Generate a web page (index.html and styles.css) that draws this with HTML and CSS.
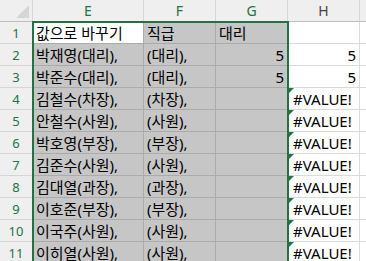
FILE: index.html
```html
<!DOCTYPE html>
<html lang="ko">
<head>
<meta charset="UTF-8" />
<title>Sheet1</title>
<link rel="stylesheet" href="styles.css">
</head>
<body>

<div class="sheet">
  <div class="corner"></div>
  <div class="col-head picked">E</div>
  <div class="col-head picked">F</div>
  <div class="col-head picked">G</div>
  <div class="col-head">H</div>
  <div class="col-head"></div>

  <div class="row-head">1</div>
  <div class="cell active">값으로 바꾸기</div>
  <div class="cell sel">직급</div>
  <div class="cell sel">대리</div>
  <div class="cell"></div>
  <div class="cell"></div>

  <div class="row-head">2</div>
  <div class="cell sel">박재영(대리),</div>
  <div class="cell sel">(대리),</div>
  <div class="cell sel num">5</div>
  <div class="cell num">5</div>
  <div class="cell"></div>

  <div class="row-head">3</div>
  <div class="cell sel">박준수(대리),</div>
  <div class="cell sel">(대리),</div>
  <div class="cell sel num">5</div>
  <div class="cell num">5</div>
  <div class="cell"></div>

  <div class="row-head">4</div>
  <div class="cell sel">김철수(차장),</div>
  <div class="cell sel">(차장),</div>
  <div class="cell sel"></div>
  <div class="cell err">#VALUE!</div>
  <div class="cell"></div>

  <div class="row-head">5</div>
  <div class="cell sel">안철수(사원),</div>
  <div class="cell sel">(사원),</div>
  <div class="cell sel"></div>
  <div class="cell err">#VALUE!</div>
  <div class="cell"></div>

  <div class="row-head">6</div>
  <div class="cell sel">박호영(부장),</div>
  <div class="cell sel">(부장),</div>
  <div class="cell sel"></div>
  <div class="cell err">#VALUE!</div>
  <div class="cell"></div>

  <div class="row-head">7</div>
  <div class="cell sel">김준수(사원),</div>
  <div class="cell sel">(사원),</div>
  <div class="cell sel"></div>
  <div class="cell err">#VALUE!</div>
  <div class="cell"></div>

  <div class="row-head">8</div>
  <div class="cell sel">김대열(과장),</div>
  <div class="cell sel">(과장),</div>
  <div class="cell sel"></div>
  <div class="cell err">#VALUE!</div>
  <div class="cell"></div>

  <div class="row-head">9</div>
  <div class="cell sel">이호준(부장),</div>
  <div class="cell sel">(부장),</div>
  <div class="cell sel"></div>
  <div class="cell err">#VALUE!</div>
  <div class="cell"></div>

  <div class="row-head">10</div>
  <div class="cell sel">이국주(사원),</div>
  <div class="cell sel">(사원),</div>
  <div class="cell sel"></div>
  <div class="cell err">#VALUE!</div>
  <div class="cell"></div>

  <div class="row-head">11</div>
  <div class="cell sel">이히열(사원),</div>
  <div class="cell sel">(사원),</div>
  <div class="cell sel"></div>
  <div class="cell err">#VALUE!</div>
  <div class="cell"></div>

  <!-- green outline around the selected range E1:G -->
  <div class="selection"></div>
</div>

</body>
</html>
```

FILE: styles.css
```css
:root {
  --head-bg: #efefef;
  --head-line: #d5d5d5;
  --grid-line: #dadada;
  --sel-bg: #c6c6c6;
  --sel-line: #ababab;
  --excel-green: #217346;
}

html, body {
  margin: 0;
  padding: 0;
  height: 100%;
  overflow: hidden;
  background: #fff;
}

.sheet {
  position: relative;
  display: grid;
  grid-template-columns: 33px 111px 72px 72px 72px 1fr;
  grid-auto-rows: 22px;
  font-family: "Noto Sans", "Noto Sans CJK KR", sans-serif;
  font-size: 15px;
  color: #000;
}

.corner,
.col-head,
.row-head,
.cell {
  box-sizing: border-box;
  border-right: 1px solid var(--grid-line);
  border-bottom: 1px solid var(--grid-line);
  white-space: nowrap;
  overflow: hidden;
}

/* top-left select-all box */
.corner {
  position: relative;
  background: var(--head-bg);
  border-right-color: var(--head-line);
  border-bottom-color: #bdbdbd;
}

.corner::after {
  content: "";
  position: absolute;
  right: 3px;
  bottom: 3px;
  border-style: solid;
  border-width: 0 0 13px 13px;
  border-color: transparent transparent #d6d6d6 transparent;
}

.col-head {
  display: flex;
  align-items: center;
  justify-content: center;
  background: var(--head-bg);
  border-right-color: var(--head-line);
  border-bottom-color: #bdbdbd;
  font-family: "Noto Sans", sans-serif;
  font-size: 14px;
  color: #444;
}

.col-head.picked {
  color: var(--excel-green);
}

.row-head {
  display: flex;
  align-items: center;
  justify-content: center;
  background: var(--head-bg);
  border-right-color: #bdbdbd;
  border-bottom-color: var(--head-line);
  font-family: "Noto Sans", sans-serif;
  font-size: 13px;
  color: var(--excel-green);
}

.cell {
  display: flex;
  align-items: center;
  padding: 0 3px;
}

.cell.sel {
  background: var(--sel-bg);
  border-color: var(--sel-line);
}

.cell.active {
  background: #fff;
  border-right-color: var(--sel-line);
  border-bottom-color: var(--sel-line);
}

.cell.num {
  justify-content: flex-end;
}

.cell.err {
  position: relative;
  padding-left: 5px;
}

/* error indicator in the top-left corner */
.cell.err::before {
  content: "";
  position: absolute;
  left: 0;
  top: 0;
  border-style: solid;
  border-width: 6px 6px 0 0;
  border-color: var(--excel-green) transparent transparent transparent;
}

.selection {
  position: absolute;
  left: 32px;
  top: 21px;
  width: 257px;
  height: 260px;
  border: 2px solid var(--excel-green);
  box-sizing: border-box;
  pointer-events: none;
}
```
